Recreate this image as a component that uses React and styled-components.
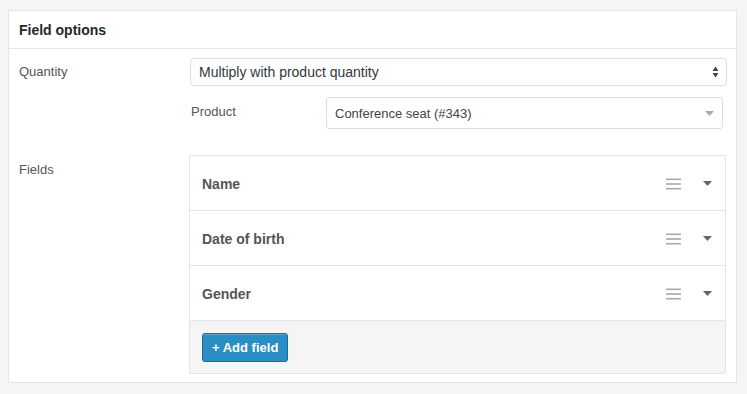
import React from "react";
import styled, { createGlobalStyle } from "styled-components";

const Global = createGlobalStyle`
  html, body { margin: 0; padding: 0; background: #f5f5f5; }
  body { font-family: "Liberation Sans", Arial, sans-serif; }
  * { box-sizing: border-box; }
`;

const Page = styled.div`
  padding: 10px 10px 0 8px;
`;

const Panel = styled.section`
  width: 729px;
  background: #fff;
  border: 1px solid #e5e5e5;
`;

const PanelHeader = styled.h2`
  margin: 0;
  height: 38px;
  padding: 0 10px;
  display: flex;
  align-items: center;
  font-size: 14px;
  font-weight: 700;
  color: #23282d;
  border-bottom: 1px solid #e5e5e5;
`;

const PanelBody = styled.div`
  padding: 9px 9px 8px 10px;
  display: grid;
  grid-template-columns: 171px 1fr;
  row-gap: 26px;
`;

const Label = styled.div`
  font-size: 13px;
  color: #555;
  padding-top: ${(p) => p.$pt || 0}px;
`;

const Cell = styled.div`
  display: flex;
  flex-direction: column;
`;

const NativeSelect = styled.div`
  height: 28px;
  border: 1px solid #ddd;
  border-radius: 4px;
  background: #fff;
  display: flex;
  align-items: center;
  justify-content: space-between;
  padding: 0 7px 0 8px;
  font-size: 14px;
  color: #32373c;
`;

const SubRow = styled.div`
  display: grid;
  grid-template-columns: 135px 1fr;
  margin-top: 11px;
  padding-left: 1px;
  padding-right: 4px;
`;

const Select2 = styled.div`
  height: 32px;
  border: 1px solid #ddd;
  border-radius: 3px;
  background: #fff;
  display: flex;
  align-items: center;
  justify-content: space-between;
  padding: 0 8px 0 8px;
  font-size: 13px;
  color: #444;
`;

const FieldsBox = styled.div`
  border: 1px solid #e5e5e5;
  width: 537px;
  margin-left: -1px;
`;

const FieldRow = styled.div`
  height: 55px;
  display: flex;
  align-items: center;
  padding: 1px 13px 0 12px;
  border-bottom: 1px solid #e5e5e5;
  font-size: 14px;
  font-weight: 700;
  color: #555;
`;

const FieldName = styled.span`
  flex: 1;
`;

const Handle = styled.svg`
  width: 15px;
  height: 12px;
  margin-right: 22px;
`;

const Footer = styled.div`
  background: #f5f5f5;
  padding: 12px 12px 11px;
`;

const Button = styled.button`
  height: 29px;
  padding: 0 9px;
  background: #2a8ec4;
  border: 1px solid #1d6a94;
  border-radius: 3px;
  color: #fff;
  font-family: "Liberation Sans", Arial, sans-serif;
  font-size: 13px;
  font-weight: 700;
  box-shadow: inset 0 1px 0 rgba(120, 200, 230, 0.5);
`;

const Updown = () => (
  <svg width="7" height="12" viewBox="0 0 7 12">
    <path d="M3.5 0.5 L6.5 5 H0.5 Z" fill="#444" />
    <path d="M3.5 11.5 L6.5 7 H0.5 Z" fill="#444" />
  </svg>
);

const Caret = ({ color }) => (
  <svg width="9" height="5" viewBox="0 0 9 5">
    <path d="M0 0 H9 L4.5 5 Z" fill={color} />
  </svg>
);

const fields = ["Name", "Date of birth", "Gender"];

export default function App() {
  return (
    <Page>
      <Global />
      <Panel>
        <PanelHeader>Field options</PanelHeader>
        <PanelBody>
          <Label $pt={6}>Quantity</Label>
          <Cell>
            <NativeSelect>
              <span>Multiply with product quantity</span>
              <Updown />
            </NativeSelect>
            <SubRow>
              <Label $pt={7}>Product</Label>
              <Select2>
                <span>Conference seat (#343)</span>
                <Caret color="#aaa" />
              </Select2>
            </SubRow>
          </Cell>
          <Label $pt={7}>Fields</Label>
          <Cell>
            <FieldsBox>
              {fields.map((f) => (
                <FieldRow key={f}>
                  <FieldName>{f}</FieldName>
                  <Handle viewBox="0 0 15 12">
                    <rect x="0" y="0.5" width="15" height="1.6" fill="#aaa" />
                    <rect x="0" y="5.2" width="15" height="1.6" fill="#aaa" />
                    <rect x="0" y="9.9" width="15" height="1.6" fill="#aaa" />
                  </Handle>
                  <Caret color="#666" />
                </FieldRow>
              ))}
              <Footer>
                <Button>+ Add field</Button>
              </Footer>
            </FieldsBox>
          </Cell>
        </PanelBody>
      </Panel>
    </Page>
  );
}
